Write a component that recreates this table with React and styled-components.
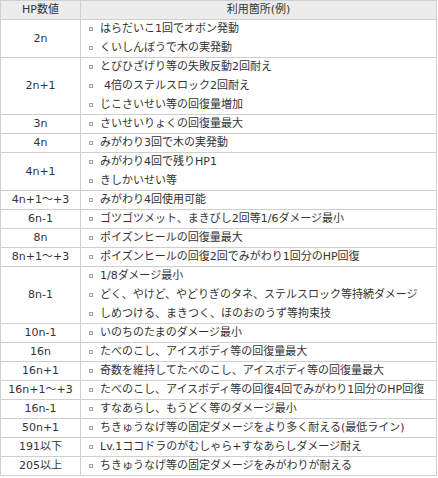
import styled, { createGlobalStyle } from "styled-components";

const GlobalStyle = createGlobalStyle`
  body {
    margin: 0;
    background: #fff;
  }
`;

const Table = styled.table`
  width: 437px;
  table-layout: fixed;
  border-collapse: collapse;
  font-family: "DejaVu Sans", "Noto Sans CJK JP", sans-serif;
  font-size: 11px;
  color: #333;
`;

const HeadCell = styled.th`
  height: 18px;
  padding: 0;
  font-weight: normal;
  line-height: 18px;
  text-align: center;
  background: #ececec;
  border: 1px solid #cfcfcf;
`;

const ValueCell = styled.td`
  padding: 0;
  line-height: 18px;
  text-align: center;
  vertical-align: middle;
  border: 1px solid #cfcfcf;
`;

const UsageCell = styled.td`
  padding: 0 0 0 8px;
  vertical-align: middle;
  border: 1px solid #cfcfcf;
`;

const List = styled.ul`
  margin: 0;
  padding: 0;
  list-style: none;
`;

const Item = styled.li`
  display: flex;
  align-items: center;
  line-height: 18px;
  white-space: nowrap;

  & + & {
    margin-top: 1px;
  }

  &::before {
    content: "";
    flex: none;
    width: 2px;
    height: 2px;
    margin-right: 7px;
    border: 1px solid #9aa6b8;
    background: #eef1f6;
  }
`;

const Indent = styled.span`
  padding-left: ${(p) => p.$gap}px;
`;

const rows = [
  ["2n", ["はらだいこ1回でオボン発動", "くいしんぼうで木の実発動"]],
  ["2n+1", ["とびひざげり等の失敗反動2回耐え", " 4倍のステルスロック2回耐え", "じこさいせい等の回復量増加"]],
  ["3n", ["さいせいりょくの回復量最大"]],
  ["4n", ["みがわり3回で木の実発動"]],
  ["4n+1", ["みがわり4回で残りHP1", "きしかいせい等"]],
  ["4n+1～+3", ["みがわり4回使用可能"]],
  ["6n-1", ["ゴツゴツメット、まきびし2回等1/6ダメージ最小"]],
  ["8n", ["ポイズンヒールの回復量最大"]],
  ["8n+1～+3", ["ポイズンヒールの回復2回でみがわり1回分のHP回復"]],
  ["8n-1", ["1/8ダメージ最小", "どく、やけど、やどりぎのタネ、ステルスロック等持続ダメージ", "しめつける、まきつく、ほのおのうず等拘束技"]],
  ["10n-1", ["いのちのたまのダメージ最小"]],
  ["16n", ["たべのこし、アイスボディ等の回復量最大"]],
  ["16n+1", ["奇数を維持してたべのこし、アイスボディ等の回復量最大"]],
  ["16n+1～+3", ["たべのこし、アイスボディ等の回復4回でみがわり1回分のHP回復"]],
  ["16n-1", ["すなあらし、もうどく等のダメージ最小"]],
  ["50n+1", ["ちきゅうなげ等の固定ダメージをより多く耐える(最低ライン)"]],
  ["191以下", ["Lv.1ココドラのがむしゃら+すなあらしダメージ耐え"]],
  ["205以上", ["ちきゅうなげ等の固定ダメージをみがわりが耐える"]],
];

function App() {
  return (
    <>
      <GlobalStyle />
      <Table>
        <colgroup>
          <col style={{ width: 80 }} />
          <col />
        </colgroup>
        <thead>
          <tr>
            <HeadCell>HP数値</HeadCell>
            <HeadCell>利用箇所(例)</HeadCell>
          </tr>
        </thead>
        <tbody>
          {rows.map(([value, uses]) => (
            <tr key={value}>
              <ValueCell>{value}</ValueCell>
              <UsageCell>
                <List>
                  {uses.map((text) =>
                    text.startsWith(" ") ? (
                      <Item key={text}>
                        <Indent $gap={4}>{text.trim()}</Indent>
                      </Item>
                    ) : (
                      <Item key={text}>{text}</Item>
                    )
                  )}
                </List>
              </UsageCell>
            </tr>
          ))}
        </tbody>
      </Table>
    </>
  );
}

export default App;
